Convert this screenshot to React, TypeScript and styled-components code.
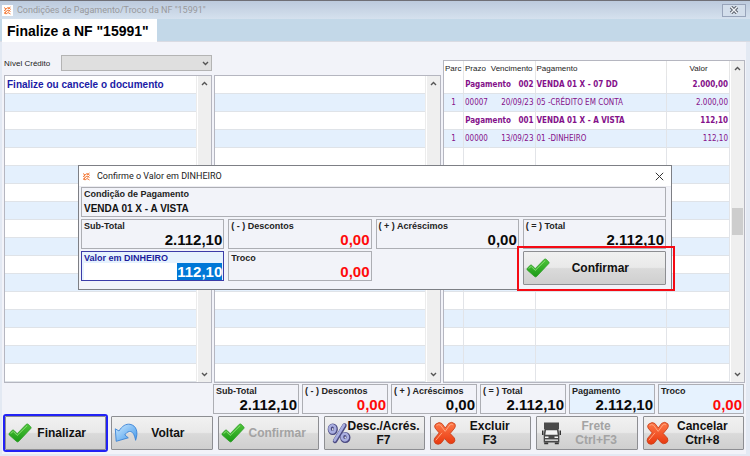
import React, { useEffect, useRef } from "react";
import styled, { createGlobalStyle, css } from "styled-components";

const ARIAL = '"Liberation Sans", Arial, sans-serif';
const CAPTION = 'Roboto, "Segoe UI", sans-serif';
const TAHOMA = '"DejaVu Sans Condensed", "DejaVu Sans", Tahoma, sans-serif';
const ROW = 18;
const ROW_COUNT = 17;

const GlobalStyle = createGlobalStyle`
  *, *::before, *::after { box-sizing: border-box; }
  body { margin: 0; background: #e3e9f3; font-family: ${ARIAL}; color: #111; }
  button, input, select { font-family: inherit; }
`;

const Window = styled.main`
  position: relative;
  min-height: 100vh;
  border-top: 1px solid #6f6f76;
  background: #e3e9f3;
`;

const TitleBar = styled.header`
  display: flex;
  align-items: center;
  gap: 4px;
  height: 18px;
  padding: 0 4px 0 2px;
  background: linear-gradient(#bccadd, #d5e1ee);
  font-family: ${CAPTION};
  font-size: 9px;
  color: #98999c;
`;

const WindowTitle = styled.h1`
  flex: 1;
  margin: 0;
  font-size: inherit;
  font-weight: 400;
  white-space: nowrap;
`;

const WindowClose = styled.button`
  display: grid;
  place-items: center;
  width: 24px;
  height: 13px;
  padding: 0;
  border: 1px solid #98a4ba;
  background: #d3deeb;
`;

const TabStrip = styled.nav`
  display: flex;
  height: 23px;
  padding-left: 2px;
  border-bottom: 1px solid #d9dbe3;
  background: #c3d8e8;
`;

const Tab = styled.button`
  height: 23px;
  padding: 0 8px 0 5px;
  border: 0;
  background: #fff;
  font-size: 14px;
  line-height: 20px;
  font-weight: 700;
  color: #000;
  white-space: nowrap;
`;

const Body = styled.div`
  margin: 0 4px 0 2px;
  padding: 13px 1px 4px 2px;
  background: #f2f3f9;
`;

const Columns = styled.div`
  display: grid;
  grid-template-columns: 208fr 227fr 302fr;
  gap: 2px;
  align-items: end;
`;

const CreditField = styled.div`
  display: flex;
  align-items: center;
  gap: 11px;
  margin: 0 0 4px;
  font-size: 8px;
`;

const CreditLabel = styled.label`
  white-space: nowrap;
  color: #222;
`;

const SelectWrap = styled.div`
  position: relative;
  flex: 1;
  height: 16px;
`;

const CreditSelect = styled.select`
  display: block;
  width: 100%;
  height: 16px;
  border: 1px solid #b4b4b4;
  border-radius: 0;
  background: #dfdfdf;
  appearance: none;
  opacity: 1;
`;

const SelectArrow = styled.span`
  position: absolute;
  right: 3px;
  top: 6px;
  display: flex;
  pointer-events: none;
`;

const Panel = styled.section`
  display: flex;
  min-width: 0;
  border: 1px solid #b5b6c0;
  background: #fff;
`;

const StripedList = styled.ul`
  flex: 1;
  margin: 0;
  padding: 0;
  border-right: 1px solid #ececec;
  list-style: none;
`;

const StripedItem = styled.li`
  height: ${ROW}px;
  padding: 0 2px;
  border-bottom: 1px solid #dfe3e8;
  font-size: 10px;
  line-height: ${ROW}px;
  font-weight: 700;
  color: #1a1aa6;
  white-space: nowrap;
  &:nth-child(even) { background: #e4f0fd; }
`;

const Track = styled.div`
  display: flex;
  flex: none;
  flex-direction: column;
  align-items: center;
  justify-content: space-between;
  width: 13px;
  margin-left: 1px;
  padding: 5px 0;
  background: #efefef;
`;

const Thumb = styled.div`
  width: 11px;
  height: 27px;
  background: #cdcdcd;
`;

const TableArea = styled.div`
  flex: 1;
  min-width: 0;
`;

const PaymentTable = styled.table`
  width: 100%;
  border-collapse: separate;
  border-spacing: 0;
  table-layout: fixed;
  font-family: ${TAHOMA};
  font-size: 8px;
`;

const Column = styled.col<{ $share: number }>`
  width: ${(p) => p.$share}%;
`;

const HeadCell = styled.th<{ $line?: boolean; $center?: boolean }>`
  height: 15px;
  padding: 0 0 0 1px;
  border-right: 1px solid ${(p) => (p.$line ? "#e6e6e6" : "transparent")};
  font-family: ${ARIAL};
  font-size: 8px;
  line-height: 15px;
  font-weight: 400;
  text-align: ${(p) => (p.$center ? "center" : "left")};
  color: #222;
  white-space: nowrap;
`;

const PaymentRow = styled.tr<{ $group?: boolean }>`
  color: #84108a;
  font-weight: ${(p) => (p.$group ? 700 : 400)};
  &:nth-child(even) { background: #e4f0fd; }
`;

const Cell = styled.td<{ $align?: "left" | "right" | "center"; $line?: boolean }>`
  height: ${ROW}px;
  padding: 0 1px;
  border-right: 1px solid ${(p) => (p.$line ? "#e2e4e8" : "transparent")};
  border-bottom: 1px solid #dfe3e8;
  line-height: 16px;
  text-align: ${(p) => p.$align ?? "left"};
  white-space: nowrap;
`;

const Totals = styled.div`
  display: grid;
  grid-template-columns: repeat(6, 1fr);
  gap: 3px;
  margin: 1px 1px 0 209px;
`;

const fieldFrame = css`
  display: flex;
  flex-direction: column;
  justify-content: space-between;
  min-width: 0;
  height: 30px;
  padding: 1px 1px 0 2px;
  border: 1px solid #adaeb4;
`;

const Field = styled.div<{ $tint?: boolean }>`
  ${fieldFrame}
  background: ${(p) => (p.$tint ? "#e6f2fe" : "#f2f3f9")};
`;

const FieldLabel = styled.span`
  font-size: 9px;
  line-height: 10px;
  font-weight: 700;
  color: #222;
  white-space: nowrap;
`;

const Amount = styled.output<{ $red?: boolean }>`
  font-size: 15px;
  line-height: 16px;
  font-weight: 700;
  text-align: right;
  color: ${(p) => (p.$red ? "#ff0a0a" : "#0a0a0a")};
`;

const Actions = styled.footer`
  display: grid;
  grid-template-columns: repeat(7, 1fr);
  gap: 5px;
  margin: 2px 1px 0;
`;

const ActionButton = styled.button<{ $marked?: boolean }>`
  display: flex;
  align-items: center;
  min-width: 0;
  height: 34px;
  padding: 0 2px;
  border: 1px solid #8d8e92;
  border-radius: 1px;
  outline: ${(p) => (p.$marked ? "2px solid #2222f5" : "none")};
  background: linear-gradient(#f1f1f1 0%, #e9e9e9 48%, #dadada 52%, #cfcfcf 100%);
  font-size: 12px;
  line-height: 14px;
  font-weight: 700;
  color: #111;
  &:disabled { color: #a3a3a3; }
  svg { flex: none; }
`;

const ActionText = styled.span<{ $centered?: boolean }>`
  flex: 1;
  margin-left: ${(p) => (p.$centered ? -12 : -6)}px;
  text-align: center;
  white-space: pre;
`;

const Dialog = styled.section`
  position: absolute;
  top: 164px;
  left: 78px;
  right: 78px;
  border: 1px solid #7d7f85;
  background: #f2f3f9;
`;

const DialogBar = styled.header`
  display: flex;
  align-items: center;
  gap: 5px;
  height: 21px;
  padding: 0 7px 0 2px;
  border-bottom: 1px solid #ececf2;
  background: #fff;
  font-family: ${CAPTION};
  font-size: 9px;
`;

const DialogTitle = styled.h2`
  flex: 1;
  margin: 0;
  font-size: inherit;
  font-weight: 400;
  color: #222;
`;

const PlainButton = styled.button`
  display: flex;
  padding: 0;
  border: 0;
  background: none;
`;

const DialogForm = styled.form`
  display: grid;
  grid-template-columns: repeat(4, 1fr);
  gap: 2px 4px;
  padding: 0 5px 8px 2px;
`;

const Condition = styled(Field)`
  grid-column: 1 / -1;
`;

const ConditionValue = styled.output`
  font-size: 10px;
  line-height: 15px;
  font-weight: 700;
`;

const EditField = styled.div`
  ${fieldFrame}
  border-color: #3c3ca8;
  background: #e6f2fe;
`;

const EditLabel = styled.label`
  font-size: 9px;
  line-height: 10px;
  font-weight: 700;
  color: #1c1c9c;
  white-space: nowrap;
`;

const AmountInput = styled.input`
  width: 100%;
  height: 17px;
  padding: 0;
  border: 0;
  outline: 0;
  background: #fff;
  font-size: 15px;
  line-height: 16px;
  font-weight: 700;
  text-align: right;
  &::selection { background: #0078d7; color: #fff; }
`;

const ConfirmSlot = styled.div`
  position: relative;
  grid-column: 4;
  display: grid;
  height: 30px;
`;

const Highlight = styled.span`
  position: absolute;
  inset: -5px -9px -10px -6px;
  border: 2px solid #f50a14;
  pointer-events: none;
`;

const AppMark = () => (
  <svg width="11" height="11" viewBox="0 0 11 11" aria-hidden="true">
    <rect width="11" height="11" fill="#fff" />
    <path d="M2 2.500l2 1.500 2-1.500 2.500 1.500M2 5l2 1.500L6 5l2.500 1.500M2 7.500L4 9l2-1.500L8.500 9M8.500 2L6 4M4 4L2.500 5.500M8.500 4.500L6.500 6.500M4.500 6.500L2.500 8.500" stroke="#f47b3a" strokeWidth="1" fill="none" />
  </svg>
);

const Chevron = ({ up = false }: { up?: boolean }) => (
  <svg width="7" height="5" viewBox="0 0 7 5" aria-hidden="true">
    <path d={up ? "M1 4l2.500-2.500L6 4" : "M1 1l2.500 2.500L6 1"} stroke="#555" strokeWidth="1.4" fill="none" />
  </svg>
);

const CheckIcon = () => (
  <svg width="24" height="24" viewBox="0 0 24 24" aria-hidden="true">
    <defs>
      <linearGradient id="check" x1="0" y1="0" x2="0" y2="1">
        <stop offset="0" stopColor="#4fc43a" />
        <stop offset="1" stopColor="#1a9a16" />
      </linearGradient>
    </defs>
    <path d="M1.300 12.200L4.300 9.300q.9-.6 1.700.1l3.200 3.300L18.300 3.300q.9-.7 1.800 0l2.700 2.600q.6.800 0 1.600L10.600 20.500q-1 .9-2 0L1.200 13.900q-.6-.8.100-1.700z" fill="url(#check)" stroke="#2f9d27" strokeWidth="0.800" />
    <path d="M2.600 12.500l2.600-2.100 4 4L19.200 4.600" stroke="#8be076" strokeWidth="1" fill="none" />
  </svg>
);

const CrossIcon = () => (
  <svg width="24" height="24" viewBox="0 0 24 24" aria-hidden="true">
    <defs>
      <linearGradient id="cross" x1="0" y1="0" x2="0" y2="1">
        <stop offset="0" stopColor="#ff7a4a" />
        <stop offset="1" stopColor="#e8380e" />
      </linearGradient>
    </defs>
    <path d="M2.600 3.200q3.600-2.800 6.300-.7l3.400 4.500 3.300-4.600q3.200-2.400 6.300.5 1 2.200-.3 4.200l-4.400 5.400 4.200 4.600q1.500 3-1 4.900-3 1.700-5.500-.6l-3.200-3.900-3.600 4.700q-2.700 2-5.700.2-2.300-2.300-.7-5.200l4.500-5.300-4-4.700q-1.300-2.200.4-4z" fill="url(#cross)" stroke="#c8421c" strokeWidth="0.900" />
    <path d="M3.500 4.300q2.500-1.500 4.200.1l4.500 6 4.700-6.500q1.500-1 3-.2M2.800 19.300l6.200-7.500" stroke="#ffa37c" strokeWidth="1" fill="none" />
  </svg>
);

const UndoIcon = () => (
  <svg width="24" height="24" viewBox="0 0 24 24" aria-hidden="true">
    <defs>
      <linearGradient id="undo" x1="0" y1="0" x2="1" y2="1">
        <stop offset="0" stopColor="#cdeaff" />
        <stop offset="1" stopColor="#3f96ea" />
      </linearGradient>
    </defs>
    <path d="M1.300 7.800L5 10C8 5 12 2.600 16 3.300 22.500 4.500 24.500 11 21.600 19.300 20.500 13 18.300 10.300 15.500 10.500 13.300 10.800 11.800 12.300 10.800 14L14.300 16.800 2.200 20.300z" fill="url(#undo)" stroke="#3a82d6" strokeWidth="0.900" strokeLinejoin="round" />
  </svg>
);

const PercentIcon = () => (
  <svg width="24" height="24" viewBox="0 0 24 24" aria-hidden="true">
    <g fill="none" strokeLinecap="round">
      <g stroke="#4b4a82" strokeWidth="4.400">
        <ellipse cx="5.800" cy="8.300" rx="2.900" ry="3.600" />
        <ellipse cx="18.300" cy="16.600" rx="3" ry="3.300" />
        <path d="M17.500 4.500L8 20" />
      </g>
      <g stroke="#a9aee0" strokeWidth="2.600">
        <ellipse cx="5.400" cy="7.800" rx="2.900" ry="3.600" />
        <ellipse cx="17.900" cy="16.100" rx="3" ry="3.300" />
        <path d="M17.100 4L7.600 19.500" />
      </g>
    </g>
  </svg>
);

const TruckIcon = () => (
  <svg width="24" height="24" viewBox="0 0 24 24" aria-hidden="true">
    <path d="M5 1.500h15v6.500H5z" fill="#4a4a4a" />
    <path d="M5.500 8h14l.8 6v7.500H4.700V14z" fill="#484848" />
    <path d="M7 9.300h11l.7 4.500H6.300z" fill="#f4f4f4" />
    <path d="M6 15.500h3.500v1.500H6zM15.500 15.500H19v1.500h-3.500zM6 18.500h13v1.200H6z" fill="#f4f4f4" />
    <path d="M5.200 21.500h4v1.800h-4zM15.800 21.500h4v1.800h-4zM3 9.500h1.500V14H3zM20.500 9.500H22V14h-1.500z" fill="#333" />
  </svg>
);

const CloseX = () => (
  <svg width="9" height="9" viewBox="0 0 9 9" aria-hidden="true">
    <path d="M.8.800l7.400 7.400M8.200.800L.8 8.200" stroke="#333" strokeWidth="1" />
  </svg>
);

const BoxedX = () => (
  <svg width="10" height="8" viewBox="0 0 10 8" aria-hidden="true">
    <path d="M2 1l6 6M8 1L2 7" stroke="#5b616c" strokeWidth="3.400" />
    <path d="M2 1l6 6M8 1L2 7" stroke="#f2f5f9" strokeWidth="1.400" />
  </svg>
);

const Scroll = ({ active = false }: { active?: boolean }) => (
  <Track>
    <Chevron up />
    {active && <Thumb />}
    <Chevron />
  </Track>
);

const Stripes = ({ first }: { first?: string }) => (
  <Panel>
    <StripedList>
      {Array.from({ length: ROW_COUNT }, (_, i) => (
        <StripedItem key={i}>{i === 0 ? first : null}</StripedItem>
      ))}
    </StripedList>
    <Scroll />
  </Panel>
);

type Total = { label: string; value: string; red?: boolean; tint?: boolean };

const summary: Total[] = [
  { label: "Sub-Total", value: "2.112,10" },
  { label: "( - ) Descontos", value: "0,00", red: true },
  { label: "( + ) Acréscimos", value: "0,00" },
  { label: "( = ) Total", value: "2.112,10" },
];

const footerTotals: Total[] = [
  ...summary,
  { label: "Pagamento", value: "2.112,10", tint: true },
  { label: "Troco", value: "0,00", red: true, tint: true },
];

const TotalField = ({ label, value, red, tint }: Total) => (
  <Field $tint={tint}>
    <FieldLabel>{label}</FieldLabel>
    <Amount $red={red}>{value}</Amount>
  </Field>
);

const payments = [
  { code: "002", plan: "VENDA 01 X - 07 DD", value: "2.000,00", term: "00007", due: "20/09/23", kind: "05 -CRÉDITO EM CONTA" },
  { code: "001", plan: "VENDA 01 X - A VISTA", value: "112,10", term: "00000", due: "13/09/23", kind: "01 -DINHEIRO" },
];

const actions = [
  { text: "Finalizar", icon: <CheckIcon />, marked: true, centered: true },
  { text: "Voltar", icon: <UndoIcon />, centered: true },
  { text: "Confirmar", icon: <CheckIcon />, disabled: true },
  { text: "Desc./Acrés.\nF7", icon: <PercentIcon /> },
  { text: "Excluir\nF3", icon: <CrossIcon /> },
  { text: "Frete\nCtrl+F3", icon: <TruckIcon />, disabled: true },
  { text: "Cancelar\nCtrl+8", icon: <CrossIcon /> },
];

const Payments = () => (
  <Panel>
    <TableArea>
      <PaymentTable>
        <colgroup>
          <Column $share={7} />
          <Column $share={9} />
          <Column $share={16} />
          <Column $share={46} />
          <Column $share={22} />
        </colgroup>
        <thead>
          <tr>
            <HeadCell $line>Parc</HeadCell>
            <HeadCell>Prazo</HeadCell>
            <HeadCell $line>Vencimento</HeadCell>
            <HeadCell $line>Pagamento</HeadCell>
            <HeadCell $center $line>Valor</HeadCell>
          </tr>
        </thead>
        <tbody>
          {payments.map((p) => (
            <React.Fragment key={p.code}>
              <PaymentRow $group>
                <Cell $line />
                <Cell $line colSpan={2} $align="right">Pagamento&nbsp;&nbsp; {p.code}</Cell>
                <Cell $line>{p.plan}</Cell>
                <Cell $line $align="right">{p.value}</Cell>
              </PaymentRow>
              <PaymentRow>
                <Cell $line $align="center">1</Cell>
                <Cell $align="center">{p.term}</Cell>
                <Cell $line $align="right">{p.due}</Cell>
                <Cell $line>{p.kind}</Cell>
                <Cell $line $align="right">{p.value}</Cell>
              </PaymentRow>
            </React.Fragment>
          ))}
          {Array.from({ length: ROW_COUNT - payments.length * 2 }, (_, i) => (
            <PaymentRow key={i}>
              <Cell $line />
              <Cell $line colSpan={2} />
              <Cell $line />
              <Cell $line />
            </PaymentRow>
          ))}
        </tbody>
      </PaymentTable>
    </TableArea>
    <Scroll active />
  </Panel>
);

const ConfirmDialog = () => {
  const amount = useRef<HTMLInputElement>(null);
  useEffect(() => {
    amount.current?.focus();
    amount.current?.select();
  }, []);
  return (
    <Dialog role="dialog" aria-labelledby="confirm-title">
      <DialogBar>
        <AppMark />
        <DialogTitle id="confirm-title">Confirme o Valor em DINHEIRO</DialogTitle>
        <PlainButton type="button" aria-label="Fechar diálogo"><CloseX /></PlainButton>
      </DialogBar>
      <DialogForm onSubmit={(e) => e.preventDefault()}>
        <Condition>
          <FieldLabel>Condição de Pagamento</FieldLabel>
          <ConditionValue>VENDA 01 X - A VISTA</ConditionValue>
        </Condition>
        {summary.map((t) => <TotalField key={t.label} {...t} />)}
        <EditField>
          <EditLabel htmlFor="cash">Valor em DINHEIRO</EditLabel>
          <AmountInput id="cash" ref={amount} defaultValue="112,10" />
        </EditField>
        <TotalField label="Troco" value="0,00" red />
        <ConfirmSlot>
          <ActionButton type="submit">
            <CheckIcon />
            <ActionText $centered>Confirmar</ActionText>
          </ActionButton>
          <Highlight />
        </ConfirmSlot>
      </DialogForm>
    </Dialog>
  );
};

export default function App() {
  return (
    <>
      <GlobalStyle />
      <Window>
        <TitleBar>
          <AppMark />
          <WindowTitle>Condições de Pagamento/Troco da NF "15991"</WindowTitle>
          <WindowClose type="button" aria-label="Fechar janela"><BoxedX /></WindowClose>
        </TitleBar>
        <TabStrip>
          <Tab type="button">Finalize a NF "15991"</Tab>
        </TabStrip>
        <Body>
          <Columns>
            <div>
              <CreditField>
                <CreditLabel htmlFor="credit">Nível Crédito</CreditLabel>
                <SelectWrap>
                  <CreditSelect id="credit" disabled><option></option></CreditSelect>
                  <SelectArrow><Chevron /></SelectArrow>
                </SelectWrap>
              </CreditField>
              <Stripes first="Finalize ou cancele o documento" />
            </div>
            <Stripes />
            <Payments />
          </Columns>
          <Totals>
            {footerTotals.map((t) => <TotalField key={t.label} {...t} />)}
          </Totals>
          <Actions>
            {actions.map((a) => (
              <ActionButton key={a.text} type="button" disabled={a.disabled} $marked={a.marked}>
                {a.icon}
                <ActionText $centered={a.centered}>{a.text}</ActionText>
              </ActionButton>
            ))}
          </Actions>
        </Body>
        <ConfirmDialog />
      </Window>
    </>
  );
}
